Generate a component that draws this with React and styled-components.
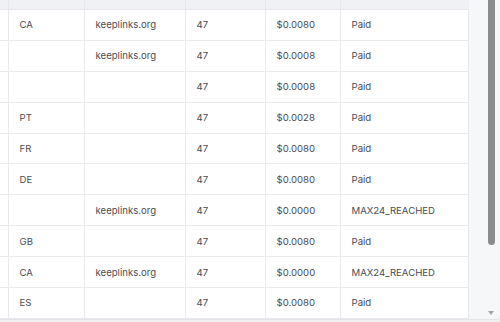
import React from 'react';
import styled, { createGlobalStyle } from 'styled-components';

const GlobalStyle = createGlobalStyle`
  html, body {
    margin: 0;
    padding: 0;
    background: #eef0f2;
    font-family: Inter, "Noto Sans", sans-serif;
  }
`;

const Card = styled.div`
  display: flex;
  width: 500px;
  height: 319px;
  background: #f6f7f8;
  border-bottom: 1px solid #e2e4e7;
  border-bottom-right-radius: 4px;
  overflow: hidden;
`;

const TableWrap = styled.div`
  width: 469px;
  flex: none;
  background: #fff;
  border-right: 1px solid #e3e5e8;
  box-sizing: border-box;
`;

const Table = styled.table`
  width: 100%;
  border-collapse: collapse;
  table-layout: fixed;
`;

const HeadCell = styled.th`
  height: 9px;
  padding: 0;
  background: #eff1f4;
  border-left: 1px solid #e6e8eb;
  border-bottom: 1px solid #e6e8eb;
  &:first-child { border-left: none; }
`;

const Row = styled.tr`
  height: 30.9px;
`;

const Cell = styled.td`
  padding: 0 0 0 11px;
  font-size: 9.6px;
  font-weight: 400;
  color: #4a4d52;
  border-left: 1px solid #e8eaed;
  border-bottom: 1px solid #e8eaed;
  white-space: nowrap;
  overflow: hidden;
  &:first-child { border-left: none; padding: 0; }
`;

const ScrollTrack = styled.div`
  flex: 1;
  display: flex;
  flex-direction: column;
  align-items: flex-end;
  padding-right: 5px;
`;

const Thumb = styled.div`
  width: 7px;
  height: 245px;
  background: #8b8b8b;
  border-radius: 0 0 4px 4px;
`;

const Spacer = styled.div`
  flex: 1;
`;

const Arrow = styled.div`
  width: 0;
  height: 0;
  margin: 0 1px 4px 0;
  border-left: 3px solid transparent;
  border-right: 3px solid transparent;
  border-top: 4px solid #a3a3a3;
`;

const widths = [8, 76, 101, 80, 75, 129];

const rows = [
  ['CA', 'keeplinks.org', '47', '$0.0080', 'Paid'],
  ['', 'keeplinks.org', '47', '$0.0008', 'Paid'],
  ['', '', '47', '$0.0008', 'Paid'],
  ['PT', '', '47', '$0.0028', 'Paid'],
  ['FR', '', '47', '$0.0080', 'Paid'],
  ['DE', '', '47', '$0.0080', 'Paid'],
  ['', 'keeplinks.org', '47', '$0.0000', 'MAX24_REACHED'],
  ['GB', '', '47', '$0.0080', 'Paid'],
  ['CA', 'keeplinks.org', '47', '$0.0000', 'MAX24_REACHED'],
  ['ES', '', '47', '$0.0080', 'Paid'],
];

export default function App() {
  return (
    <>
      <GlobalStyle />
      <Card>
        <TableWrap>
          <Table>
            <colgroup>
              {widths.map((w, i) => <col key={i} style={{ width: w }} />)}
            </colgroup>
            <thead>
              <tr>
                {widths.map((_, i) => <HeadCell key={i} />)}
              </tr>
            </thead>
            <tbody>
              {rows.map((r, i) => (
                <Row key={i}>
                  <Cell />
                  {r.map((v, j) => <Cell key={j}>{v}</Cell>)}
                </Row>
              ))}
            </tbody>
          </Table>
        </TableWrap>
        <ScrollTrack>
          <Thumb />
          <Spacer />
          <Arrow />
        </ScrollTrack>
      </Card>
    </>
  );
}
